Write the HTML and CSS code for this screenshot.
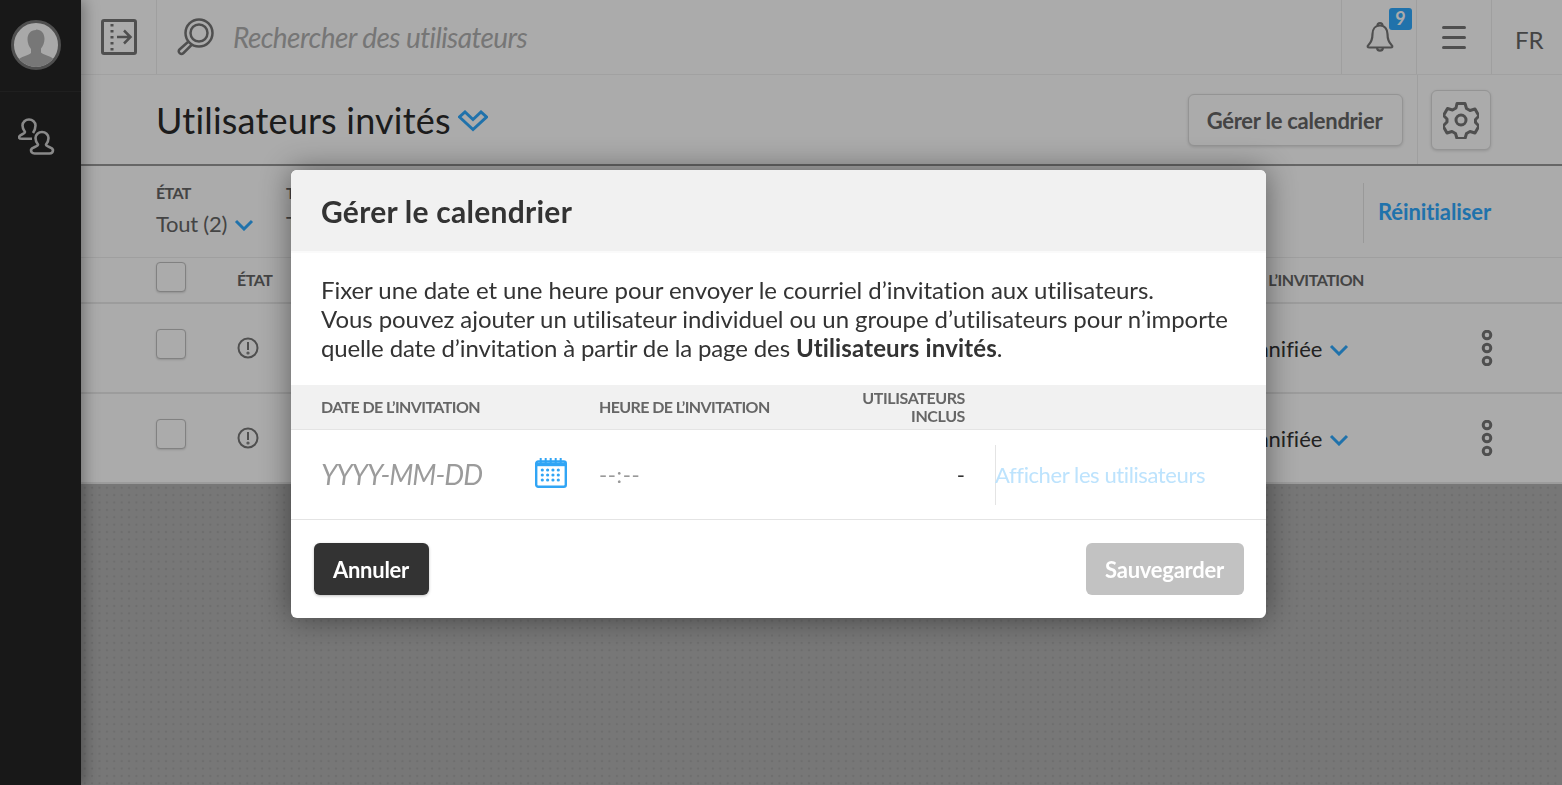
FILE: index.html
```html
<!DOCTYPE html>
<html lang="fr">
<head>
    <meta charset="UTF-8">
    <meta name="viewport" content="width=device-width, initial-scale=1.0">
    <title>Utilisateurs invités</title>
    <link rel="stylesheet" href="styles.css">
</head>
<body>
    <div class="app">
        <aside class="sidebar">
            <div class="sidebar-top">
                <svg class="avatar" width="50" height="50" viewBox="0 0 50 50">
                    <defs><clipPath id="avatar-clip"><circle cx="25" cy="25" r="22"/></clipPath></defs>
                    <circle cx="25" cy="25" r="23.5" fill="#fcfcfc" stroke="#767676" stroke-width="3"/>
                    <g clip-path="url(#avatar-clip)" fill="#b2b2b2">
                        <path d="M25 10c-5.500 0-8.500 4-8.500 9.500 0 3.500 1.500 7 3.500 9.500v4c-3 2.500-10 3.500-14 7.500v12h38V40c-4-4-11-5-14-7.500v-4c2-2.500 3.500-6 3.500-9.500 0-5.500-3-9.500-8.500-9.500z"/>
                    </g>
                </svg>
            </div>
            <svg class="side-icon" width="37" height="38" viewBox="0 0 37 38" fill="none" stroke="#ccc" stroke-width="2.600" stroke-linejoin="round">
                <path d="M15 15C17 12 17.500 10 17.500 7.500 17.500 4 14.500 1.500 11 1.500S4.500 4 4.500 7.500C4.500 10 5 11.500 7 14c0 2-5.500 2.500-6 5 0 1.300 1 1.800 3 1.800h10"/>
                <path d="M20 26.500C18 24 17.500 22 17.500 20c0-3.500 3-6 6.500-6s6.500 2.500 6.500 6c0 2-.5 4-2.500 6.500 0 2.500 6.500 2.500 7 5.500 0 2-1 3.500-3.500 3.500h-15c-2.500 0-3.500-1.500-3.500-3.500.5-3 7-3 7-5.500z"/>
            </svg>
        </aside>

        <main class="main">
            <header class="topbar">
                <div class="topbar-toggle">
                    <svg width="36" height="36" viewBox="0 0 36 36" fill="none" stroke="#777">
                        <rect x="1.500" y="1.500" width="33" height="33" rx="1.500" stroke-width="3"/>
                        <path d="M11 5v27" stroke-width="3" stroke-dasharray="2.500 3.500"/>
                        <path d="M16 18h13M23 11.500l6.500 6.500-6.500 6.500" stroke-width="2.500"/>
                    </svg>
                </div>
                <div class="search">
                    <svg width="38" height="38" viewBox="0 0 38 38" fill="none" stroke="#777" stroke-width="2.500">
                        <circle cx="22" cy="15" r="13.500"/>
                        <circle cx="22" cy="15" r="8.500"/>
                        <path d="M11.500 23.500 2.500 31.500c-2.500 2.500 1.500 6 4 3.500l8.500-8.500"/>
                    </svg>
                    <span class="search-text">Rechercher des utilisateurs</span>
                </div>
                <div class="topbar-cell bell-cell">
                    <svg width="28" height="32" viewBox="0 0 28 32" fill="none" stroke="#777" stroke-width="2.200" stroke-linejoin="round">
                        <path d="M14 4.500c-5 0-7.500 4-7.500 8.500 0 5-1.500 8.500-4 11-1.500 1.500-1 2.500 1 2.500h21c2 0 2.500-1 1-2.500-2.500-2.500-4-6-4-11 0-4.500-2.500-8.500-7.500-8.500z"/>
                        <path d="M11.500 4.500c0-3.300 5-3.300 5 0M11 27c.5 3.500 5.500 3.500 6 0"/>
                    </svg>
                    <span class="badge">9</span>
                </div>
                <div class="topbar-cell menu-cell">
                    <span class="menu-bar"></span>
                    <span class="menu-bar"></span>
                    <span class="menu-bar"></span>
                </div>
                <div class="topbar-cell lang-cell">FR</div>
            </header>

            <section class="page-head">
                <h1 class="page-title">Utilisateurs invités</h1>
                <svg class="title-chevron" width="30" height="22" viewBox="0 0 30 22" fill="none" stroke="#31abff" stroke-width="3">
                    <path d="M1.500 7 15 19.500 28.500 7 23 2 15 9.500 7 2z"/>
                </svg>
                <button class="btn-outline">Gérer le calendrier</button>
                <div class="gear-cell">
                    <button class="btn-gear">
                        <svg width="36" height="38" viewBox="0 0 36 38" fill="none" stroke="#777" stroke-width="3" stroke-linejoin="round">
                            <path d="M14 2h8l1.500 5 3.500 2 5-1.500 4 7-3.500 3.500v3l3.500 3.500-4 7-5-1.500-3.500 2-1.500 5h-8l-1.500-5-3.500-2-5 1.500-4-7L4 20.500v-3L.5 14l4-7 5 1.500 3.500-2z" transform="translate(0 .5)"/>
                            <circle cx="18" cy="19" r="5"/>
                        </svg>
                    </button>
                </div>
            </section>

            <section class="filters">
                <div class="filter">
                    <div class="filter-label">ÉTAT</div>
                    <div class="filter-value">Tout (2)
                        <svg class="chevron chevron-filter" width="20" height="12" viewBox="0 0 20 12" fill="none" stroke="#31abff" stroke-width="3"><path d="M2 2l8 8 8-8"/></svg>
                    </div>
                </div>
                <div class="filter">
                    <div class="filter-label">TYPE</div>
                    <div class="filter-value">Tout</div>
                </div>
                <div class="filter-reset"><a class="reset-link">Réinitialiser</a></div>
            </section>

            <div class="table-head">
                <span class="checkbox"></span>
                <span class="col-state">ÉTAT</span>
                <span class="col-date">DATE DE L’INVITATION</span>
            </div>
            <div class="table-row">
                <span class="checkbox"></span>
                <svg class="col-icon" width="22" height="22" viewBox="0 0 22 22" fill="none" stroke="#777" stroke-width="2"><circle cx="11" cy="11" r="9.500"/><path d="M11 5v8"/><circle cx="11" cy="16" r=".6"/></svg>
                <span class="row-status">Planifiée
                    <svg class="chevron" width="20" height="12" viewBox="0 0 20 12" fill="none" stroke="#31abff" stroke-width="3"><path d="M2 2l8 8 8-8"/></svg>
                </span>
                <svg class="more" width="12" height="36" viewBox="0 0 12 36" fill="none" stroke="#777" stroke-width="3"><circle cx="6" cy="5" r="3.800"/><circle cx="6" cy="18" r="3.800"/><circle cx="6" cy="31" r="3.800"/></svg>
            </div>
            <div class="table-row">
                <span class="checkbox"></span>
                <svg class="col-icon" width="22" height="22" viewBox="0 0 22 22" fill="none" stroke="#777" stroke-width="2"><circle cx="11" cy="11" r="9.500"/><path d="M11 5v8"/><circle cx="11" cy="16" r=".6"/></svg>
                <span class="row-status">Planifiée
                    <svg class="chevron" width="20" height="12" viewBox="0 0 20 12" fill="none" stroke="#31abff" stroke-width="3"><path d="M2 2l8 8 8-8"/></svg>
                </span>
                <svg class="more" width="12" height="36" viewBox="0 0 12 36" fill="none" stroke="#777" stroke-width="3"><circle cx="6" cy="5" r="3.800"/><circle cx="6" cy="18" r="3.800"/><circle cx="6" cy="31" r="3.800"/></svg>
            </div>
            <div class="page-empty"></div>
        </main>
    </div>

    <div class="overlay"></div>

    <div class="modal">
        <div class="modal-header">
            <h2 class="modal-title">Gérer le calendrier</h2>
        </div>
        <div class="modal-body">
            <p>Fixer une date et une heure pour envoyer le courriel d’invitation aux utilisateurs.<br>
            Vous pouvez ajouter un utilisateur individuel ou un groupe d’utilisateurs pour n’importe <span class="body-tight">quelle date d’invitation à partir de la page des</span> <strong>Utilisateurs invités</strong>.</p>
        </div>
        <div class="sched-head">
            <span>DATE DE L’INVITATION</span>
            <span>HEURE DE L’INVITATION</span>
            <span class="sched-users">UTILISATEURS INCLUS</span>
        </div>
        <div class="sched-row">
            <div class="sched-date">
                <span class="date-text">YYYY-MM-DD</span>
                <svg class="cal-icon" width="32" height="30" viewBox="0 0 32 30" fill="none" stroke="#31a5f5">
                    <rect x="1.200" y="3.500" width="29.600" height="25.300" rx="2" stroke-width="2.400"/>
                    <path d="M1 6.500h30" stroke-width="3.400"/>
                    <path d="M5.700 0v5M10.700 0v5M15.700 0v5M20.700 0v5M25.700 0v5" stroke-width="2"/>
                    <path d="M7.300 12h17M7.300 17h17M7.300 22h17" stroke-width="3.200" stroke-linecap="round" stroke-dasharray="0 5.330"/>
                </svg>
            </div>
            <span class="time-text">--:--</span>
            <span class="users-count">-</span>
            <a class="users-link">Afficher les utilisateurs</a>
        </div>
        <div class="modal-footer">
            <button class="btn-dark">Annuler</button>
            <button class="btn-disabled">Sauvegarder</button>
        </div>
    </div>
</body>
</html>
```

FILE: styles.css
```css
* {
    margin: 0;
    padding: 0;
    box-sizing: border-box;
}

body {
    font-family: 'Lato', 'Liberation Sans', sans-serif;
    font-variant-ligatures: none;
    width: 1562px;
    height: 785px;
    overflow: hidden;
    color: #2a2a2a;
    background: #fff;
}

button {
    font-family: inherit;
    font-variant-ligatures: none;
}

.app {
    display: flex;
    height: 785px;
}

/* sidebar */
.sidebar {
    width: 81px;
    flex-shrink: 0;
    background: #242424;
    box-shadow: 3px 0 14px rgba(0,0,0,0.35);
    position: relative;
}

.sidebar-top {
    height: 92px;
    padding: 20px 0 0 11px;
    border-bottom: 1px solid #2f2f2f;
}

.avatar {
    display: block;
}

.side-icon {
    display: block;
    margin: 26px 0 0 18px;
}

/* main column */
.main {
    flex: 1;
    display: flex;
    flex-direction: column;
    min-width: 0;
}

.topbar {
    height: 75px;
    flex-shrink: 0;
    display: flex;
    background: #fff;
    border-bottom: 1px solid #f0f0f0;
}

.topbar-toggle {
    width: 76px;
    padding: 19px 0 0 20px;
    border-right: 1px solid #eee;
}

.search {
    flex: 1;
    display: flex;
    align-items: center;
    padding: 0 0 0 20px;
    gap: 18px;
}

.search-text {
    font-size: 28px;
    font-style: italic;
    color: #b0b0b0;
    letter-spacing: -0.56px;
}

.topbar-cell {
    width: 75px;
    position: relative;
    border-left: 1px solid #eee;
}

.bell-cell {
    padding: 21px 0 0 24px;
}

.badge {
    position: absolute;
    left: 47px;
    top: 8px;
    width: 23px;
    height: 22px;
    background: #31abff;
    border-radius: 3px;
    color: #fff;
    font-size: 18px;
    font-weight: 700;
    line-height: 21px;
    text-align: center;
}

.menu-cell {
    display: flex;
    flex-direction: column;
    gap: 7px;
    padding: 26px 0 0 25px;
}

.menu-bar {
    display: block;
    width: 24px;
    height: 3px;
    border-radius: 2px;
    background: #777;
}

.lang-cell {
    width: 71px;
    padding: 25px 0 0 23px;
    font-size: 24px;
    color: #666;
}

.page-head {
    height: 91px;
    flex-shrink: 0;
    display: flex;
    align-items: center;
    padding-left: 75px;
    background: #fff;
    border-bottom: 2px solid #999;
}

.page-title {
    font-size: 36px;
    font-weight: 400;
    color: #2a2a2a;
    letter-spacing: 0.2px;
}

.title-chevron {
    margin: 2px 0 0 7px;
}

.btn-outline {
    margin-left: auto;
    width: 215px;
    height: 52px;
    padding: 2px 2px 0 0;
    background: #fff;
    border: 1px solid #ddd;
    border-radius: 6px;
    box-shadow: 0 1px 3px rgba(0,0,0,0.15);
    font-size: 22px;
    font-weight: 700;
    color: #666;
    letter-spacing: -0.25px;
}

.gear-cell {
    width: 145px;
    height: 100%;
    margin-left: 14px;
    padding: 15px 0 0 13px;
    border-left: 1px solid #eee;
}

.btn-gear {
    display: flex;
    align-items: center;
    justify-content: center;
    width: 60px;
    height: 60px;
    background: #fff;
    border: 1px solid #ddd;
    border-radius: 6px;
    box-shadow: 0 1px 3px rgba(0,0,0,0.15);
}

/* filter row */
.filters {
    height: 92px;
    flex-shrink: 0;
    display: flex;
    padding: 17px 71px 0 75px;
    background: #fff;
    border-bottom: 1px solid #eee;
}

.filter {
    width: 130px;
}

.filter-label {
    font-size: 16px;
    font-weight: 700;
    color: #666;
    line-height: 20px;
    letter-spacing: -0.6px;
}

.filter-value {
    font-size: 22px;
    color: #666;
    line-height: 26px;
    margin-top: 8px;
    letter-spacing: -0.25px;
}

.chevron {
    margin-left: 1px;
    position: relative;
    top: -1px;
}

.chevron-filter {
    margin-left: 2px;
}

.filter-reset {
    margin-left: auto;
    width: 128px;
    height: 60px;
    padding: 15px 0 0 14px;
    border-left: 1px solid #e4e4e4;
}

.reset-link {
    font-size: 22px;
    font-weight: 700;
    color: #31abff;
    letter-spacing: -0.1px;
}

/* table behind the dialog */
.table-head {
    height: 46px;
    flex-shrink: 0;
    display: flex;
    align-items: center;
    padding-left: 75px;
    background: #fff;
    border-bottom: 2px solid #e9e9e9;
}

.checkbox {
    width: 30px;
    height: 30px;
    flex-shrink: 0;
    background: #fff;
    border: 1px solid #c0c0c0;
    border-radius: 4px;
    box-shadow: 0 1px 2px rgba(0,0,0,0.15);
}

.table-head .checkbox {
    margin-bottom: 6px;
}

.col-state {
    margin-left: 51px;
    margin-bottom: 2px;
    font-size: 16px;
    font-weight: 700;
    color: #666;
    letter-spacing: -0.5px;
}

.col-date {
    margin-left: auto;
    margin-right: 198px;
    margin-bottom: 2px;
    font-size: 16px;
    font-weight: 700;
    color: #666;
    letter-spacing: -0.45px;
}

.table-row {
    height: 90px;
    flex-shrink: 0;
    display: flex;
    align-items: center;
    padding-left: 75px;
    background: #fff;
    border-bottom: 2px solid #e9e9e9;
}

.table-row .checkbox {
    margin-bottom: 8px;
}

.col-icon {
    margin-left: 51px;
}

.row-status {
    margin-left: auto;
    font-size: 22px;
    color: #333;
}

.more {
    margin: 0 69px 0 132px;
}

.page-empty {
    flex: 1;
    background-color: #b2b2b2;
    background-image: radial-gradient(circle, #a4a4a4 1px, transparent 1.500px);
    background-size: 7.4px 7.4px;
}

.overlay {
    position: fixed;
    left: 0;
    top: 0;
    width: 100%;
    height: 100%;
    background: rgba(0,0,0,0.33);
}

/* dialog */
.modal {
    position: absolute;
    left: 291px;
    top: 170px;
    width: 975px;
    height: 448px;
    display: flex;
    flex-direction: column;
    background: #fff;
    border-radius: 6px;
    box-shadow: 0 0 30px rgba(0,0,0,0.45);
}

.modal-header {
    height: 83px;
    flex-shrink: 0;
    padding: 22px 30px 0;
    background: #f1f1f1;
    border-radius: 6px 6px 0 0;
    border-bottom: 2px solid #fafafa;
}

.modal-title {
    font-size: 30px;
    font-weight: 700;
    color: #333;
    line-height: 38px;
    letter-spacing: 0.26px;
}

.modal-body {
    height: 132px;
    flex-shrink: 0;
    padding: 22px 30px 0;
    font-size: 24px;
    line-height: 29px;
    color: #333;
    letter-spacing: -0.065px;
}

.body-tight {
    letter-spacing: -0.14px;
}

.modal-body strong {
    letter-spacing: 0.14px;
}

.sched-head {
    height: 45px;
    flex-shrink: 0;
    display: grid;
    grid-template-columns: 278px 246px 120px;
    align-items: center;
    padding-left: 30px;
    background: #f1f1f1;
    border-bottom: 1px solid #e4e4e4;
    font-size: 16px;
    font-weight: 700;
    color: #666;
    line-height: 18px;
    letter-spacing: -0.6px;
}

.sched-users {
    text-align: right;
    letter-spacing: -0.4px;
}

.sched-row {
    height: 90px;
    flex-shrink: 0;
    display: grid;
    grid-template-columns: 278px 246px 120px 1fr;
    align-items: center;
    padding-left: 30px;
    border-bottom: 1px solid #e4e4e4;
}

.sched-date {
    display: flex;
    align-items: center;
    justify-content: space-between;
    padding-right: 32px;
}

.date-text {
    font-size: 28px;
    font-style: italic;
    color: #9b9b9b;
    letter-spacing: -1px;
    margin-top: -2px;
}

.cal-icon {
    margin-top: -3px;
}

.time-text {
    font-size: 22px;
    color: #999;
    letter-spacing: 0.6px;
}

.users-count {
    font-size: 22px;
    color: #333;
    text-align: right;
}

.users-link {
    margin-left: 30px;
    height: 60px;
    line-height: 60px;
    box-shadow: inset 1px 0 0 #e4e4e4;
    font-size: 22px;
    color: #bde3fd;
    letter-spacing: -0.4px;
}

.modal-footer {
    flex: 1;
    display: flex;
    justify-content: space-between;
    padding: 23px 22px 0 23px;
}

.btn-dark {
    width: 115px;
    height: 52px;
    padding: 1px 1px 0 0;
    border: none;
    border-radius: 6px;
    background: #333;
    color: #fff;
    font-size: 22px;
    font-weight: 700;
    letter-spacing: -0.25px;
    box-shadow: 0 1px 3px rgba(0,0,0,0.25);
}

.btn-disabled {
    width: 158px;
    height: 52px;
    padding: 1px 1px 0 0;
    border: none;
    border-radius: 6px;
    background: #c2c2c2;
    color: #fff;
    font-size: 22px;
    font-weight: 700;
    letter-spacing: -0.25px;
}
```
